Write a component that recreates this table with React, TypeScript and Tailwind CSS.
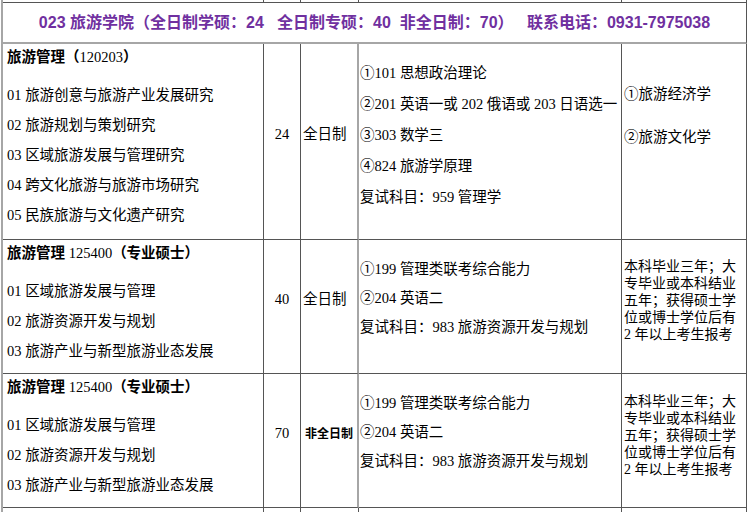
import type { ReactNode } from "react";

type Row = {
  height: string;
  title: ReactNode;
  directions: string[];
  count: string;
  mode: string;
  modeBold?: boolean;
  exams: string[];
  examPad: string;
  examLine: string;
  notes: string[];
  notePad: string;
  noteLine: string;
};

const proTitle = (
  <>
    <span className="font-bold">旅游管理</span> 125400
    <span className="font-bold">（专业硕士）</span>
  </>
);

const proNotes = [
  "本科毕业三年；大",
  "专毕业或本科结业",
  "五年；获得硕士学",
  "位或博士学位后有",
  "2 年以上考生报考",
];

const rows: Row[] = [
  {
    height: "h-[196px]",
    title: (
      <>
        <span className="font-bold">旅游管理</span>
        <span className="font-bold">（</span>120203
        <span className="font-bold">）</span>
      </>
    ),
    directions: [
      "01 旅游创意与旅游产业发展研究",
      "02 旅游规划与策划研究",
      "03 区域旅游发展与管理研究",
      "04 跨文化旅游与旅游市场研究",
      "05 民族旅游与文化遗产研究",
    ],
    count: "24",
    mode: "全日制",
    exams: [
      "①101 思想政治理论",
      "②201 英语一或 202 俄语或 203 日语选一",
      "③303 数学三",
      "④824 旅游学原理",
      "复试科目：959 管理学",
    ],
    examPad: "pt-[14px]",
    examLine: "h-[31px] leading-[31px]",
    notes: ["①旅游经济学", "②旅游文化学"],
    notePad: "pt-[29px]",
    noteLine: "h-[43px] leading-[43px]",
  },
  {
    height: "h-[134px]",
    title: proTitle,
    directions: [
      "01 区域旅游发展与管理",
      "02 旅游资源开发与规划",
      "03 旅游产业与新型旅游业态发展",
    ],
    count: "40",
    mode: "全日制",
    exams: ["①199 管理类联考综合能力", "②204 英语二", "复试科目：983 旅游资源开发与规划"],
    examPad: "pt-[15px]",
    examLine: "h-[29px] leading-[29px]",
    notes: proNotes,
    notePad: "pt-[18px] text-[14px]",
    noteLine: "h-[17px] leading-[17px]",
  },
  {
    height: "h-[134px]",
    title: proTitle,
    directions: [
      "01 区域旅游发展与管理",
      "02 旅游资源开发与规划",
      "03 旅游产业与新型旅游业态发展",
    ],
    count: "70",
    mode: "非全日制",
    modeBold: true,
    exams: ["①199 管理类联考综合能力", "②204 英语二", "复试科目：983 旅游资源开发与规划"],
    examPad: "pt-[15px]",
    examLine: "h-[29px] leading-[29px]",
    notes: proNotes,
    notePad: "pt-[19px] text-[14px]",
    noteLine: "h-[17px] leading-[17px]",
  },
];

const cell = "border-r border-b border-[#555]";

// circled numbers look right only in the CJK face
const withCircles = (text: string) =>
  text.split(/([①②③④⑤])/).map((part, i) =>
    /[①②③④⑤]/.test(part) ? (
      <span key={i} className="leading-none [font-family:'Noto_Sans_CJK_SC',sans-serif]">
        {part}
      </span>
    ) : (
      part
    ),
  );

const Strip = ({ h }: { h: string }) => (
  <>
    <div className={`${h} border-r border-[#555]`} />
    <div className={`${h} border-r border-[#555]`} />
    <div className={`${h} border-r border-[#555]`} />
    <div className={`${h} border-r border-[#555]`} />
    <div className={`${h} border-r border-[#555]`} />
  </>
);

export default function App() {
  return (
    <div className="h-[512px] w-[750px] overflow-hidden bg-white text-[14.5px] text-black [font-family:'Liberation_Serif','Noto_Sans_CJK_SC',serif]">
      <div className="ml-px w-[746px] border-l-2 border-[#a6a6a6]">
        <div className="grid grid-cols-[261px_37px_58px_263px_125px]">
          <Strip h="h-[2px]" />

          <div className="col-span-5 flex h-[42px] items-center justify-center border-t border-r border-b-2 border-t-[#555] border-r-[#555] border-b-[#a6a6a6] whitespace-pre text-[16px] font-bold text-[#7030a0] [font-family:'Liberation_Sans','Noto_Sans_CJK_SC',sans-serif]">
            {"023 旅游学院（全日制学硕：24   全日制专硕：40  非全日制：70）   联系电话：0931-7975038"}
          </div>

          {rows.map((row, i) => (
            <div key={i} className="contents">
              <div className={`${cell} ${row.height} pl-[4px]`}>
                <div className="leading-[26px]">{row.title}</div>
                <div className="mt-[10px] leading-[30px]">
                  {row.directions.map((d) => (
                    <div key={d}>{d}</div>
                  ))}
                </div>
              </div>
              <div className={`${cell} ${row.height} flex items-center justify-center pb-[13px]`}>
                {row.count}
              </div>
              <div
                className={`${row.height} flex items-center border-r-2 border-b border-r-[#a6a6a6] border-b-[#555] pb-[13px] ${
                  row.modeBold ? "justify-center text-[12px] font-bold" : "pl-[2px]"
                }`}
              >
                {row.mode}
              </div>
              <div className={`${cell} ${row.height} ${row.examPad} whitespace-nowrap pl-px`}>
                {row.exams.map((e) => (
                  <div key={e} className={row.examLine}>
                    {withCircles(e)}
                  </div>
                ))}
              </div>
              <div className={`${cell} ${row.height} ${row.notePad} pl-[2px]`}>
                {row.notes.map((n) => (
                  <div key={n} className={row.noteLine}>
                    {withCircles(n)}
                  </div>
                ))}
              </div>
            </div>
          ))}

          <Strip h="h-[5px]" />
        </div>
      </div>
    </div>
  );
}
